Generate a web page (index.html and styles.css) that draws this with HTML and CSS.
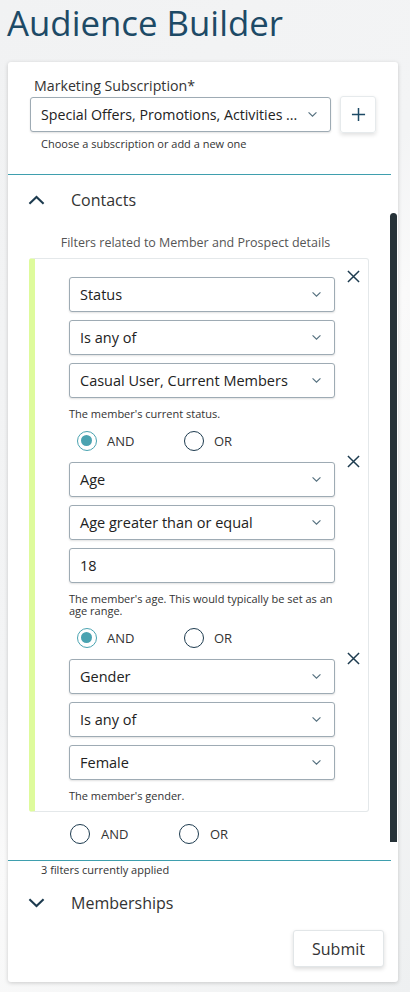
FILE: index.html
```html
<!DOCTYPE html>
<html>
<head>
<meta charset="utf-8">
<link rel="stylesheet" href="styles.css">
</head>
<body>
<h1 class="title">Audience Builder</h1>
<div class="card">
  <div class="sub">
    <div class="label">Marketing Subscription*</div>
    <div class="sub-row">
      <div class="select wide"><span class="val">Special Offers, Promotions, Activities ...</span><svg class="chev" viewBox="0 0 12 8"><path d="M1.5 1.5 L6 6 L10.5 1.5" fill="none" stroke="#55707f" stroke-width="1.3"/></svg></div>
      <div class="plus"><svg viewBox="0 0 16 16" width="15" height="15"><path d="M8 1 V15 M1 8 H15" stroke="#1d4a66" stroke-width="1.6"/></svg></div>
    </div>
    <div class="hint first">Choose a subscription or add a new one</div>
  </div>
  <div class="rule"></div>
  <div class="scrollwrap">
    <div class="section-head"><svg class="sec-chev" viewBox="0 0 18 10"><path d="M1.5 9 L9 1.8 L16.5 9" fill="none" stroke="#1d3b4f" stroke-width="2.2"/></svg><span>Contacts</span></div>
    <div class="desc">Filters related to Member and Prospect details</div>
    <div class="group">
      <div class="filter">
        <svg class="close" viewBox="0 0 14 14"><path d="M1 1 L13 13 M13 1 L1 13" stroke="#1d3b4f" stroke-width="1.6"/></svg>
        <div class="select"><span class="val">Status</span><svg class="chev" viewBox="0 0 12 8"><path d="M1.5 1.5 L6 6 L10.5 1.5" fill="none" stroke="#55707f" stroke-width="1.3"/></svg></div>
        <div class="select"><span class="val">Is any of</span><svg class="chev" viewBox="0 0 12 8"><path d="M1.5 1.5 L6 6 L10.5 1.5" fill="none" stroke="#55707f" stroke-width="1.3"/></svg></div>
        <div class="select"><span class="val">Casual User, Current Members</span><svg class="chev" viewBox="0 0 12 8"><path d="M1.5 1.5 L6 6 L10.5 1.5" fill="none" stroke="#55707f" stroke-width="1.3"/></svg></div>
        <div class="hint">The member's current status.</div>
        <div class="radios"><span class="radio on"></span><span class="rlabel">AND</span><span class="radio"></span><span class="rlabel">OR</span></div>
      </div>
      <div class="filter">
        <svg class="close" viewBox="0 0 14 14"><path d="M1 1 L13 13 M13 1 L1 13" stroke="#1d3b4f" stroke-width="1.6"/></svg>
        <div class="select"><span class="val">Age</span><svg class="chev" viewBox="0 0 12 8"><path d="M1.5 1.5 L6 6 L10.5 1.5" fill="none" stroke="#55707f" stroke-width="1.3"/></svg></div>
        <div class="select"><span class="val">Age greater than or equal</span><svg class="chev" viewBox="0 0 12 8"><path d="M1.5 1.5 L6 6 L10.5 1.5" fill="none" stroke="#55707f" stroke-width="1.3"/></svg></div>
        <div class="select"><span class="val">18</span></div>
        <div class="hint">The member's age. This would typically be set as an age range.</div>
        <div class="radios"><span class="radio on"></span><span class="rlabel">AND</span><span class="radio"></span><span class="rlabel">OR</span></div>
      </div>
      <div class="filter">
        <svg class="close" viewBox="0 0 14 14"><path d="M1 1 L13 13 M13 1 L1 13" stroke="#1d3b4f" stroke-width="1.6"/></svg>
        <div class="select"><span class="val">Gender</span><svg class="chev" viewBox="0 0 12 8"><path d="M1.5 1.5 L6 6 L10.5 1.5" fill="none" stroke="#55707f" stroke-width="1.3"/></svg></div>
        <div class="select"><span class="val">Is any of</span><svg class="chev" viewBox="0 0 12 8"><path d="M1.5 1.5 L6 6 L10.5 1.5" fill="none" stroke="#55707f" stroke-width="1.3"/></svg></div>
        <div class="select"><span class="val">Female</span><svg class="chev" viewBox="0 0 12 8"><path d="M1.5 1.5 L6 6 L10.5 1.5" fill="none" stroke="#55707f" stroke-width="1.3"/></svg></div>
        <div class="hint">The member's gender.</div>
      </div>
    </div>
    <div class="radios outer"><span class="radio"></span><span class="rlabel">AND</span><span class="radio"></span><span class="rlabel">OR</span></div>
    <div class="scrollbar"></div>
  </div>
  <div class="rule"></div>
  <div class="applied">3 filters currently applied</div>
  <div class="section-head closed"><svg class="sec-chev" viewBox="0 0 18 10"><path d="M1.5 1 L9 8.2 L16.5 1" fill="none" stroke="#1d3b4f" stroke-width="2.2"/></svg><span>Memberships</span></div>
  <div class="actions"><button class="submit">Submit</button></div>
</div>
</body>
</html>
```
FILE: styles.css
```css
html, body { margin: 0; padding: 0; }
body {
  width: 410px;
  height: 992px;
  overflow: hidden;
  font-family: "Open Sans", "Noto Sans", sans-serif;
  color: #333;
  background: linear-gradient(125deg, #f1f2f3 0%, #f3f4f5 45%, #fafafa 55%, #eef0f1 100%);
}
.title {
  margin: 0;
  padding: 0 0 0 7px;
  height: 58px;
  box-sizing: border-box;
  font-size: 34.8px;
  font-weight: 400;
  color: #1d4a66;
  line-height: 46px;
}
.card {
  margin: 4px 12px 0 8px;
  background: #fff;
  border-radius: 3px;
  box-shadow: 0 1px 4px rgba(0,0,0,0.18);
  height: 920px;
  box-sizing: border-box;
  padding-top: 14px;
  position: relative;
}
.sub { padding: 0 0 0 22px; }
.label { font-size: 14.2px; line-height: 20px; padding-left: 4px; color: #333; }
.sub-row { display: flex; align-items: center; gap: 9px; margin-top: 0; }
.select {
  box-sizing: border-box;
  height: 35px;
  border: 1px solid #9eabb4;
  border-radius: 3px;
  box-shadow: 0 1px 2px rgba(0,0,0,0.12);
  display: flex;
  align-items: center;
  padding: 0 12px 0 10px;
  font-size: 14.5px;
  color: #222;
  background: #fff;
}
.select .val { flex: 1; white-space: nowrap; }
.chev { width: 11px; height: 7px; margin-left: 6px; flex: none; }
.wide { width: 301px; font-size: 14.2px; }
.wide .chev { margin-left: 3px; }
.plus {
  width: 36px; height: 37px;
  box-sizing: border-box;
  border: 1px solid #e6eaec;
  border-radius: 3px;
  box-shadow: 0 2px 4px rgba(0,0,0,0.12);
  display: flex; align-items: center; justify-content: center;
}
.hint { font-size: 11px; line-height: 12px; color: #333; }
.hint.first { padding-left: 11px; margin-top: 5px; }
.rule { height: 1px; background: #3f9fae; margin-right: 7px; }
.sub + .rule { margin-top: 24px; }
.scrollwrap { position: relative; padding-bottom: 16px; }
.scrollbar {
  position: absolute;
  right: 1px; top: 38px; bottom: 18px;
  width: 7px;
  background: #263238;
  border-radius: 4px 4px 0 0;
}
.section-head {
  display: flex; align-items: center;
  height: 50px;
  padding-left: 20px;
  font-size: 16px;
  color: #333;
}
.sec-chev { width: 17px; height: 10px; margin-right: 26px; }
.desc { text-align: center; font-size: 12.5px; color: #555; margin: 0 15px 0 0; line-height: 16px; padding-top: 10px; }
.group {
  margin: 7px 29px 0 21px;
  border: 1px solid #e4e8ea;
  border-left: 6px solid #defb9c;
  border-radius: 3px;
  padding: 18px 0 9px 34px;
}
.filter { position: relative; width: 266px; display: flex; flex-direction: column; gap: 8px; }
.filter .hint { margin-top: 2px; }
.close { position: absolute; right: -25px; top: -7px; width: 13px; height: 13px; }
.radios { display: flex; align-items: center; height: 20px; padding-left: 8px; margin: 3px 0 11px; }
.radio {
  width: 20px; height: 20px; box-sizing: border-box;
  border: 1.5px solid #1d3b4f;
  border-radius: 50%;
  position: relative;
  flex: none;
}
.radio.on { border-color: #4aa3b1; }
.radio.on::after {
  content: ""; position: absolute; left: 3px; top: 3px; width: 11px; height: 11px; border-radius: 50%; background: #4aa3b1;
}
.rlabel { font-size: 13px; color: #333; margin-left: 10px; width: 77px; }
.outer { padding-left: 62px; margin: 12px 0 0; }
.outer .rlabel { width: 78px; margin-left: 11px; }
.applied { font-size: 11px; color: #333; padding: 3px 0 0 33px; line-height: 12px; }
.section-head.closed { height: 40px; margin-top: 7px; }
.actions { display: flex; justify-content: flex-end; padding: 7px 14px 0 0; }
.submit {
  font-family: inherit;
  font-size: 16px;
  color: #333;
  background: #fff;
  border: 1px solid #e2e6e8;
  border-radius: 3px;
  box-shadow: 0 2px 4px rgba(0,0,0,0.14);
  width: 91px; height: 37px;
}
```
